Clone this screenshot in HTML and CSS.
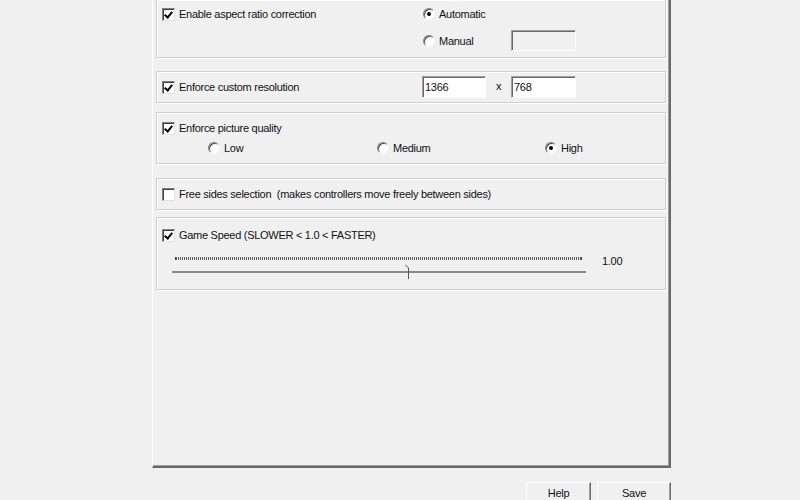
FILE: index.html
```html
<!DOCTYPE html>
<html>
<head>
<link rel="stylesheet" href="styles.css">
</head>
<body>
<div class="page">
 <div class="panel">

  <div class="group g-aspect">
   <div class="left-col">
    <div class="check-row"><span class="check on"></span><span>Enable aspect ratio correction</span></div>
   </div>
   <div class="right-col">
    <div class="radio-row"><span class="radio on"></span><span>Automatic</span></div>
    <div class="radio-row manual"><span class="radio"></span><span class="manual-label">Manual</span><span class="textbox disabled"></span></div>
   </div>
  </div>

  <div class="group g-res">
   <div class="left-col res-col">
    <div class="check-row"><span class="check on"></span><span>Enforce custom resolution</span></div>
   </div>
   <span class="textbox w64">1366</span>
   <span class="times">x</span>
   <span class="textbox w65">768</span>
  </div>

  <div class="group g-quality">
   <div class="check-row"><span class="check on"></span><span>Enforce picture quality</span></div>
   <div class="quality-row">
    <div class="radio-row"><span class="radio"></span><span>Low</span></div>
    <div class="radio-row"><span class="radio"></span><span>Medium</span></div>
    <div class="radio-row"><span class="radio on"></span><span>High</span></div>
   </div>
  </div>

  <div class="group g-sides">
   <div class="check-row"><span class="check"></span><span>Free sides selection&nbsp; (makes controllers move freely between sides)</span></div>
  </div>

  <div class="group g-speed">
   <div class="check-row"><span class="check on"></span><span>Game Speed (SLOWER &lt; 1.0 &lt; FASTER)</span></div>
   <div class="slider-row">
    <div class="slider">
     <div class="ticks"></div>
     <div class="track"></div>
     <svg class="thumb" width="6" height="15" viewBox="0 0 6 15"><path d="M0 0.5 L3.5 4 V15" fill="none" stroke="#555" stroke-width="1"/></svg>
    </div>
    <span class="slider-value">1.00</span>
   </div>
  </div>

 </div>
 <div class="buttons">
  <div class="button help">Help</div>
  <div class="button save">Save</div>
 </div>
</div>
</body>
</html>
```

FILE: styles.css
```css
*{
   box-sizing:border-box;
}

html, body{
   margin:0;
   height:100%;
   overflow:hidden;
   background:#f0f0f0;
}

body{
   font-family:"Liberation Sans", Arial, sans-serif;
   font-size:11px;
   letter-spacing:-0.28px;
   color:#111;
}

.page{
   width:519px;
   margin-left:152px;
}

.panel{
   height:468px;
   padding:0 3px 0 3px;
   border-left:1px solid #ffffff;
   border-right:2px solid #696969;
   border-bottom:2px solid #696969;
   box-shadow:inset -1px -1px 0 #a0a0a0;
   display:flex;
   flex-direction:column;
}

/* group boxes */
.group{
   width:510px;
   border:1px solid #cfcfcf;
   box-shadow:inset 1px 1px 0 #ffffff, 1px 1px 0 #ffffff;
   padding-left:5px;
}

.g-aspect{
   height:58px;
   border-top:none;
   padding-top:7px;
   display:flex;
}

.left-col{
   width:261px;
   flex:none;
}

.res-col{
   width:260px;
}

.right-col{
   display:flex;
   flex-direction:column;
}

.radio-row.manual{
   margin-top:9px;
   height:21px;
}

.manual-label{
   width:72px;
}

.g-res{
   margin-top:13px;
   height:32px;
   padding-top:4px;
   display:flex;
   align-items:flex-start;
}

.g-res .check-row{
   height:22px;
}

.times{
   width:25px;
   height:22px;
   line-height:21px;
   text-align:center;
}

.g-quality{
   margin-top:9px;
   height:52px;
   padding-top:8px;
}

.quality-row{
   margin-top:6px;
   padding-left:46px;
   display:grid;
   grid-template-columns:169px 168px 100px;
}

.g-sides{
   margin-top:14px;
   height:32px;
   padding-top:8px;
}

.g-speed{
   margin-top:7px;
   height:73px;
   padding-top:10px;
}

/* controls */
.check-row, .radio-row{
   display:flex;
   align-items:center;
   height:14px;
   white-space:nowrap;
}

.check{
   width:13px;
   height:13px;
   margin-right:4px;
   flex:none;
   background:#fff;
   border:1px solid;
   border-color:#808080 #e0e0e0 #e0e0e0 #808080;
   box-shadow:inset 1px 1px 0 #404040;
   position:relative;
}

.check.on::after{
   content:"";
   position:absolute;
   left:2px;
   top:1px;
   width:3px;
   height:6px;
   border-right:2px solid #000;
   border-bottom:2px solid #000;
   transform:translate(1px, 0) rotate(40deg);
}

.radio{
   width:12px;
   height:12px;
   margin-right:4px;
   flex:none;
   border-radius:50%;
   background:#fff;
   border:1px solid;
   border-color:#808080 #f4f4f4 #f4f4f4 #808080;
   box-shadow:inset 1px 1px 0 #505050;
   position:relative;
}

.radio.on::after{
   content:"";
   position:absolute;
   left:3px;
   top:3px;
   width:4px;
   height:4px;
   border-radius:50%;
   background:#000;
}

.textbox{
   display:flex;
   align-items:center;
   height:22px;
   padding-left:2px;
   background:#fff;
   border:1px solid;
   border-color:#a0a0a0 #ffffff #ffffff #a0a0a0;
   box-shadow:inset 1px 1px 0 #696969;
}

.textbox.disabled{
   width:65px;
   height:21px;
   background:#f0f0f0;
}

.w64{
   width:64px;
}

.w65{
   width:65px;
}

/* trackbar */
.slider-row{
   display:flex;
   margin-top:10px;
   height:30px;
}

.slider{
   position:relative;
   width:418px;
   height:30px;
   margin-left:8px;
}

.ticks{
   position:absolute;
   left:5px;
   top:5px;
   width:407px;
   height:3px;
   background:repeating-linear-gradient(to right, #5a5a5a 0 1px, transparent 1px 2px);
   border-left:1px solid #444;
   border-right:1px solid #444;
}

.track{
   position:absolute;
   left:2px;
   top:19px;
   width:414px;
   height:2px;
   background:#8a8a8a;
}

.thumb{
   position:absolute;
   left:235px;
   top:12px;
}

.slider-value{
   margin-left:14px;
   margin-top:3px;
}

/* dialog buttons */
.buttons{
   display:flex;
   justify-content:flex-end;
   gap:6px;
   margin-top:14px;
}

.button{
   height:24px;
   padding-top:4px;
   text-align:center;
   background:#f0f0f0;
   border:1px solid;
   border-color:#ffffff #696969 #696969 #ffffff;
   box-shadow:inset -1px -1px 0 #a0a0a0;
}

.help{
   width:65px;
}

.save{
   width:74px;
}
```
